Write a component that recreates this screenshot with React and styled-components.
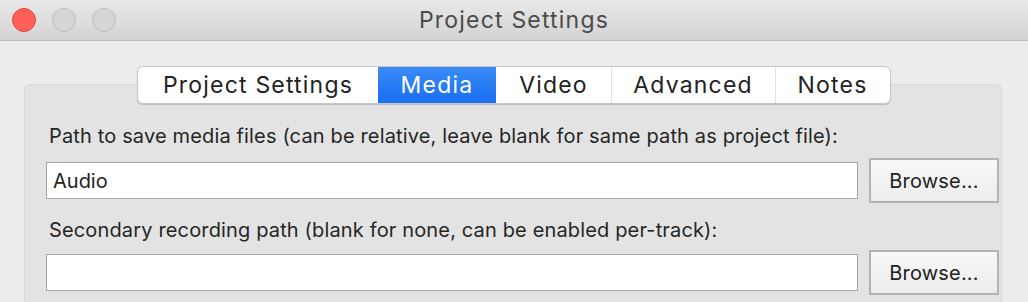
import React from "react";
import styled, { createGlobalStyle } from "styled-components";

const GlobalStyle = createGlobalStyle`
   html, body {
      margin: 0;
      padding: 0;
      background: #ececec;
      font-family: Inter, "Liberation Sans", Arial, sans-serif;
      -webkit-font-smoothing: antialiased;
   }
   * { box-sizing: border-box; }
`;

const Window = styled.div`
   width: 1028px;
   height: 302px;
   overflow: hidden;
   background: #ececec;
`;

const TitleBar = styled.header`
   height: 41px;
   display: grid;
   grid-template-columns: 1fr auto 1fr;
   align-items: center;
   padding: 0 12px;
   background: linear-gradient(#e8e8e8, #d3d3d3);
   border-bottom: 1px solid #bfbfbf;
`;

const Lights = styled.div`
   display: flex;
   gap: 16px;
`;

const Light = styled.span`
   width: 24px;
   height: 24px;
   border-radius: 50%;
   background: ${p => p.$red ? "#fe5f57" : "#d5d5d5"};
   border: 1px solid ${p => p.$red ? "#e1483f" : "#bcbcbc"};
`;

const Title = styled.h1`
   margin: 0;
   font-size: 23px;
   font-weight: 400;
   color: #4b4b4b;
   letter-spacing: 1.2px;
`;

const Tabs = styled.nav`
   position: relative;
   z-index: 1;
   display: flex;
   justify-content: center;
   margin-top: 25px;
   padding-right: 1px;
`;

const TabGroup = styled.div`
   display: flex;
   height: 38px;
   background: #fff;
   border: 1px solid #c6c6c6;
   border-radius: 6px;
   box-shadow: 0 1px 1px rgba(0, 0, 0, 0.18);
   overflow: hidden;
`;

const Tab = styled.button`
   width: ${p => p.$w}px;
   height: 100%;
   border: none;
   border-left: 1px solid ${p => p.$first || p.$active || p.$afterActive ? "transparent" : "#e1e1e1"};
   padding: 0;
   font-family: inherit;
   font-size: 23px;
   letter-spacing: 1.2px;
   color: ${p => p.$active ? "#fff" : "#222"};
   background: ${p => p.$active ? "linear-gradient(#3a8bf8, #1a6ef2)" : "transparent"};
`;

const Panel = styled.section`
   margin: -20px 26px 0 24px;
   height: 240px;
   padding: 39px 2px 0 21px;
   background: #e3e3e3;
   border: 1px solid #d8d8d8;
   border-bottom: none;
   border-radius: 6px 6px 0 0;
`;

const Label = styled.div`
   font-size: 20px;
   line-height: 24px;
   letter-spacing: 0.15px;
   color: #262626;
   padding-left: 3px;
   margin-bottom: ${p => p.$mb}px;
`;

const Row = styled.div`
   display: flex;
   align-items: center;
   gap: 11px;
   height: 45px;
   margin-bottom: ${p => p.$mb || 0}px;
`;

const Field = styled.input`
   flex: 1;
   height: 37px;
   border: 1px solid #a8a8a8;
   background: #fff;
   padding: 0 6px;
   font-family: inherit;
   font-size: 20px;
   color: #222;
   outline: none;
`;

const Button = styled.button`
   width: 130px;
   height: 45px;
   border: 2px solid #b2b2b2;
   background: linear-gradient(#f8f8f8, #ececec);
   font-family: inherit;
   font-size: 20px;
   letter-spacing: 0.2px;
   color: #222;
   padding: 0;
`;

const tabs = [
   { name: "Project Settings", w: 240 },
   { name: "Media", w: 118, active: true },
   { name: "Video", w: 115 },
   { name: "Advanced", w: 164 },
   { name: "Notes", w: 115 },
];

export default function App() {
   return (
      <Window>
         <GlobalStyle />
         <TitleBar>
            <Lights>
               <Light $red />
               <Light />
               <Light />
            </Lights>
            <Title>Project Settings</Title>
            <span />
         </TitleBar>
         <Tabs>
            <TabGroup>
               {tabs.map((t, i) => (
                  <Tab
                     key={t.name}
                     $w={t.w}
                     $first={i === 0}
                     $active={t.active}
                     $afterActive={i > 0 && tabs[i - 1].active}
                  >
                     {t.name}
                  </Tab>
               ))}
            </TabGroup>
         </Tabs>
         <Panel>
            <Label $mb={10}>Path to save media files (can be relative, leave blank for same path as project file):</Label>
            <Row $mb={15}>
               <Field defaultValue="Audio" />
               <Button>Browse...</Button>
            </Row>
            <Label $mb={8}>Secondary recording path (blank for none, can be enabled per-track):</Label>
            <Row>
               <Field defaultValue="" />
               <Button>Browse...</Button>
            </Row>
         </Panel>
      </Window>
   );
}
